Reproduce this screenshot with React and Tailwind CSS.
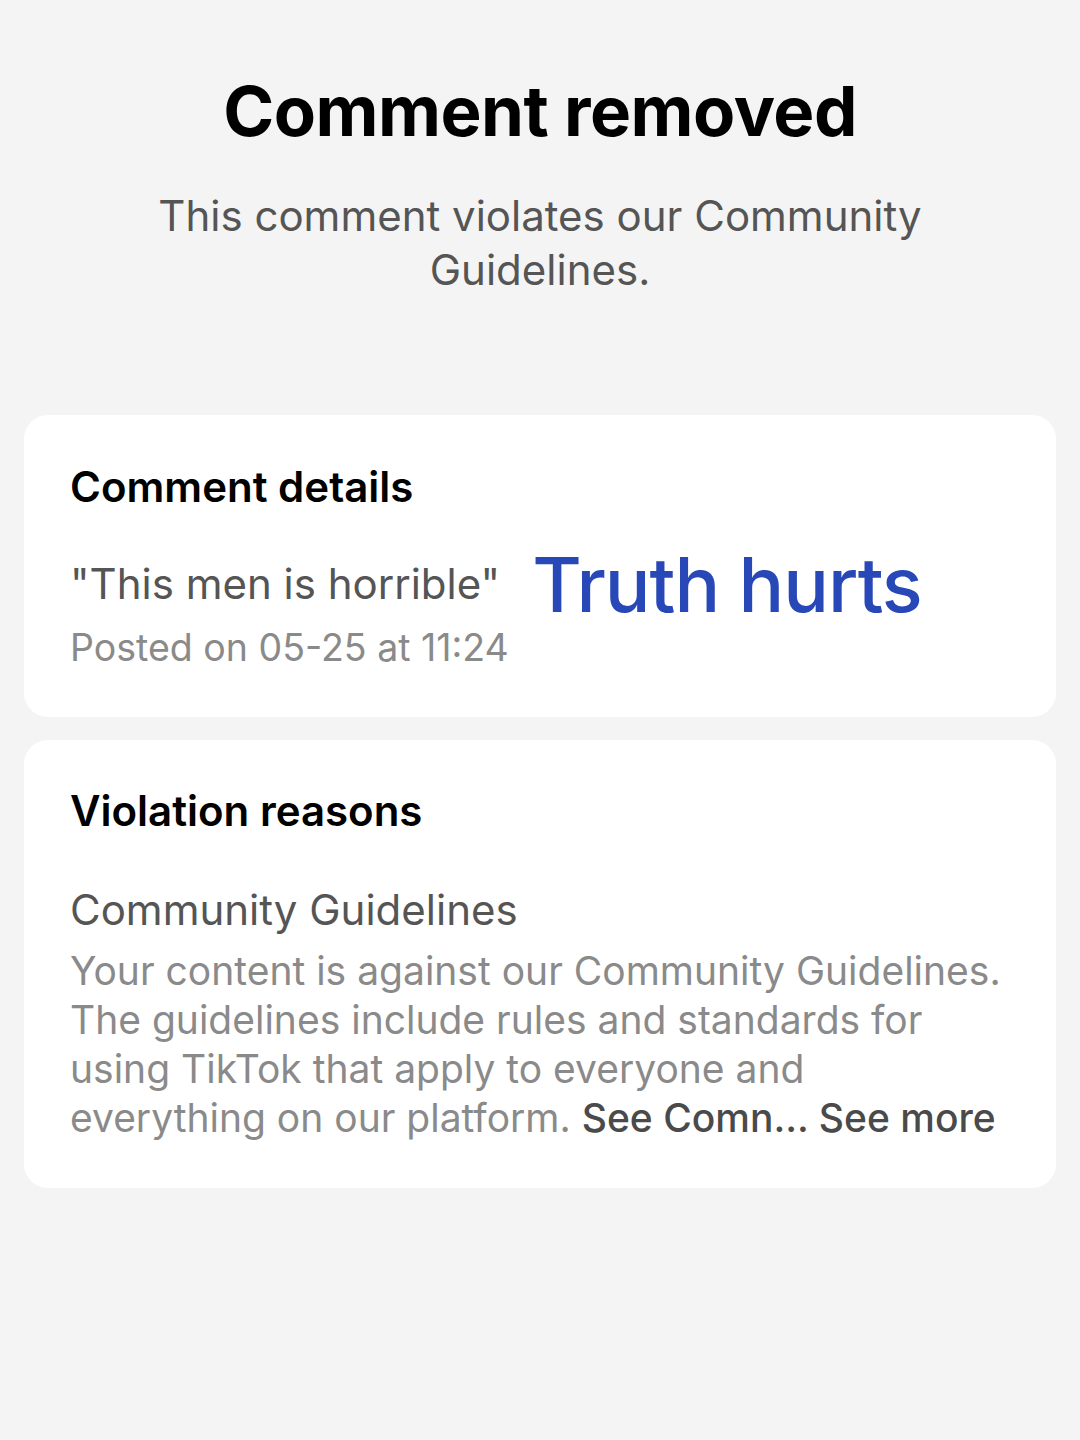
export default function App() {
  return (
    <div
      className="min-h-[1440px] w-full bg-[#f4f4f4] pb-10"
      style={{ fontFamily: 'Inter, "Noto Sans", sans-serif' }}
    >
      <div className="px-10 pt-[70px] text-center">
        <h1 className="text-[69px] font-bold leading-[82px] tracking-[-0.5px] text-black">
          Comment removed
        </h1>
        <p className="mx-auto mt-[37px] max-w-[820px] text-[42px] leading-[54px] text-[#555]">
          This comment violates our Community Guidelines.
        </p>
      </div>

      <div className="mx-6 mt-[118px] rounded-[24px] bg-white px-[46px] pt-[44px] pb-[44px]">
        <h2 className="text-[42px] font-semibold leading-[56px] text-black">Comment details</h2>
        <div className="mt-[34px] flex items-center gap-[32px]">
          <p className="text-[42px] leading-[56px] text-[#555]">"This men is horrible"</p>
          <span className="text-[76px] font-medium leading-[70px] tracking-[-1px] text-[#2848b8]">
            Truth hurts
          </span>
        </div>
        <p className="mt-[4px] text-[37.5px] leading-[50px] text-[#8a8a8a]">
          Posted on 05-25 at 11:24
        </p>
      </div>

      <div className="mx-6 mt-[23px] rounded-[24px] bg-white px-[46px] pt-[43px] pb-[46px]">
        <h2 className="text-[42px] font-semibold leading-[56px] text-black">Violation reasons</h2>
        <p className="mt-[43px] text-[42px] leading-[56px] text-[#555]">Community Guidelines</p>
        <p className="mt-[8px] text-[39px] leading-[49px] text-[#8a8a8a]">
          Your content is against our Community Guidelines.
          <br />
          The guidelines include rules and standards for
          <br />
          using TikTok that apply to everyone and
          <br />
          everything on our platform.{' '}
          <span className="font-medium text-[#4a4a4a]">See Comn... See more</span>
        </p>
      </div>
    </div>
  );
}
